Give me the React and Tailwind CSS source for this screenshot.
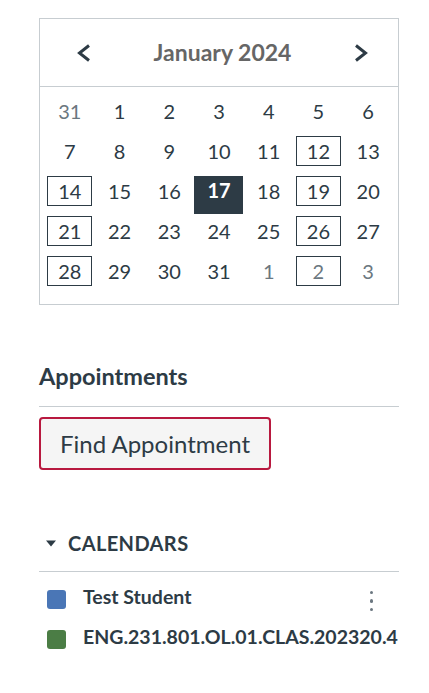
import React from "react";

const weeks = [
  [
    { d: 31, muted: true },
    { d: 1 },
    { d: 2 },
    { d: 3 },
    { d: 4 },
    { d: 5 },
    { d: 6 },
  ],
  [
    { d: 7 },
    { d: 8 },
    { d: 9 },
    { d: 10 },
    { d: 11 },
    { d: 12, boxed: true },
    { d: 13 },
  ],
  [
    { d: 14, boxed: true },
    { d: 15 },
    { d: 16 },
    { d: 17, today: true },
    { d: 18 },
    { d: 19, boxed: true },
    { d: 20 },
  ],
  [
    { d: 21, boxed: true },
    { d: 22 },
    { d: 23 },
    { d: 24 },
    { d: 25 },
    { d: 26, boxed: true },
    { d: 27 },
  ],
  [
    { d: 28, boxed: true },
    { d: 29 },
    { d: 30 },
    { d: 31 },
    { d: 1, muted: true },
    { d: 2, muted: true, boxed: true },
    { d: 3, muted: true },
  ],
];

function Chevron({ dir }) {
  return (
    <svg width="16" height="20" viewBox="0 0 16 20">
      <polyline
        points={dir === "left" ? "13,2.5 3.5,10 13,17.5" : "3,2.5 12.5,10 3,17.5"}
        fill="none"
        stroke="#2d3b45"
        strokeWidth="3"
      />
    </svg>
  );
}

function DayCell({ day }) {
  if (day.today) {
    return (
      <div className="flex h-[40px] justify-center">
        <div className="mt-[5px] h-[38px] w-[49px] bg-[#2d3b45] text-center text-[20px] font-bold leading-[28px] text-white">
          {day.d}
        </div>
      </div>
    );
  }
  return (
    <div className="flex h-[40px] items-center justify-center">
      <div
        className={`flex h-[30px] w-[45px] items-center justify-center text-[20px] leading-none ${
          day.boxed ? "border border-[#2d3b45]" : ""
        } ${day.muted ? "text-[#6b7780]" : "text-[#2d3b45]"}`}
      >
        {day.d}
      </div>
    </div>
  );
}

function MiniCalendar() {
  return (
    <div className="border border-[#c7cdd1]">
      <div className="flex h-[68px] items-center justify-between border-b border-[#c7cdd1] pl-[36px] pr-[29px]">
        <Chevron dir="left" />
        <span className="text-[23px] font-bold text-[#666]">January 2024</span>
        <Chevron dir="right" />
      </div>
      <div className="px-[5px] pt-[4px] pb-[13px]">
        {weeks.map((week, i) => (
          <div key={i} className="grid grid-cols-7">
            {week.map((day, j) => (
              <DayCell key={j} day={day} />
            ))}
          </div>
        ))}
      </div>
    </div>
  );
}

export default function App() {
  return (
    <div
      className="min-h-[693px] w-[429px] bg-white pl-[39px] pt-[18px] text-[#2d3b45]"
      style={{ fontFamily: "Lato, 'Noto Sans', sans-serif" }}
    >
      <div className="w-[360px]">
        <MiniCalendar />

        <h2 className="mt-[57px] border-b border-[#c7cdd1] pb-[16px] text-[23.5px] font-bold leading-[28px]">
          Appointments
        </h2>

        <button className="mt-[10px] flex h-[53px] w-[232px] items-center justify-center rounded-[4px] border-2 border-[#b8193f] bg-[#f5f5f5] text-[24px] text-[#2d3b45]">
          Find Appointment
        </button>

        <div className="mt-[61px] flex items-center border-b border-[#c7cdd1] pb-[16px]">
          <svg className="ml-[7px]" width="10" height="7" viewBox="0 0 10 7">
            <polygon points="0,0.5 10,0.5 5,6.5" fill="#2d3b45" />
          </svg>
          <span className="ml-[12px] text-[20px] font-bold leading-[24px] tracking-[0.4px]">
            CALENDARS
          </span>
        </div>

        <ul className="mt-[13px]">
          <li className="flex h-[24px] items-center">
            <span className="ml-[8px] mt-[4px] h-[19px] w-[19px] rounded-[3px] bg-[#4a76b6]" />
            <span className="ml-[17px] flex-1 text-[19.5px] font-bold">Test Student</span>
            <span className="mr-[26px] mt-[8px] flex flex-col items-center gap-[5px]">
              <span className="h-[3.5px] w-[3.5px] rounded-full bg-[#6b7780]" />
              <span className="h-[3.5px] w-[3.5px] rounded-full bg-[#6b7780]" />
              <span className="h-[3.5px] w-[3.5px] rounded-full bg-[#6b7780]" />
            </span>
          </li>
          <li className="mt-[16px] flex h-[24px] items-center">
            <span className="ml-[8px] mt-[4px] h-[19px] w-[19px] rounded-[3px] bg-[#4b7d45]" />
            <span className="ml-[17px] whitespace-nowrap text-[19.5px] font-bold">
              ENG.231.801.OL.01.CLAS.202320.4
            </span>
          </li>
        </ul>
      </div>
    </div>
  );
}
